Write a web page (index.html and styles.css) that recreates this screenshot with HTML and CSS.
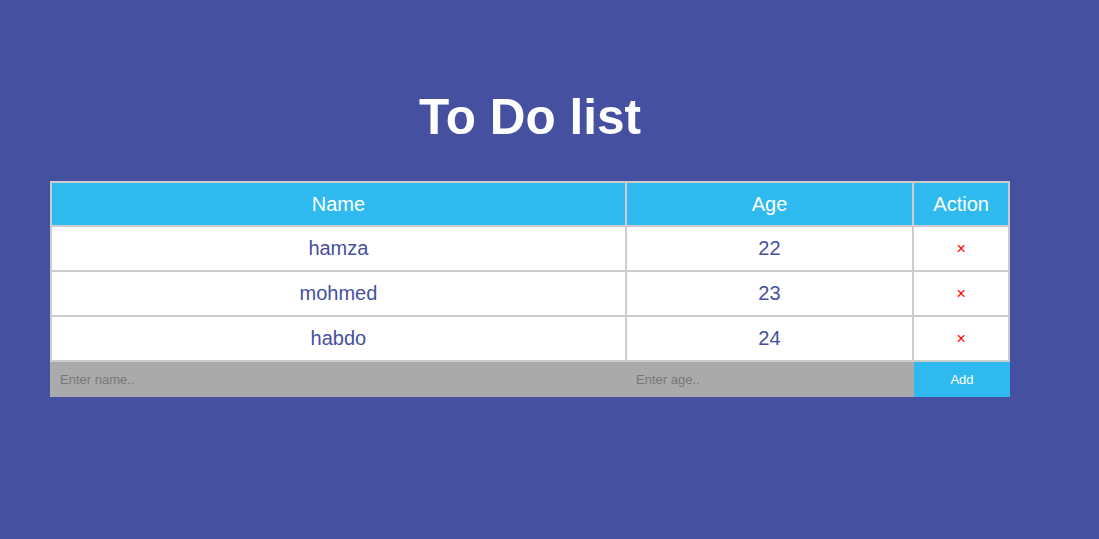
FILE: index.html
```html
<!DOCTYPE html>
<html>
<head>
<meta charset="utf-8">
<link rel="stylesheet" href="styles.css">
</head>
<body>
<div class="app">
  <h1 class="title">To Do list</h1>
  <table class="list">
    <thead>
      <tr><th class="c-name">Name</th><th class="c-age">Age</th><th class="c-act">Action</th></tr>
    </thead>
    <tbody>
      <tr><td>hamza</td><td>22</td><td class="del">×</td></tr>
      <tr><td>mohmed</td><td>23</td><td class="del">×</td></tr>
      <tr><td>habdo</td><td>24</td><td class="del">×</td></tr>
    </tbody>
  </table>
  <form class="add-form">
    <input class="in-name" type="text" placeholder="Enter name..">
    <input class="in-age" type="text" placeholder="Enter age..">
    <button class="add-btn" type="button">Add</button>
  </form>
</div>
</body>
</html>
```

FILE: styles.css
```css
html, body {
  margin: 0;
  padding: 0;
  background: #4650a0;
  font-family: "Liberation Sans", Arial, sans-serif;
}
.app {
  width: 960px;
  margin-left: 50px;
  padding-top: 89px;
}
.title {
  margin: 0 0 36px;
  color: #fff;
  font-size: 49.5px;
  line-height: 56px;
  font-weight: bold;
  text-align: center;
}
.list {
  width: 960px;
  border-collapse: collapse;
  table-layout: fixed;
}
.c-name { width: 60%; }
.c-age { width: 30%; }
.c-act { width: 10%; }
.list th, .list td {
  border: 2px solid #ccc;
  height: 45px;
  padding: 0;
  text-align: center;
  font-size: 20px;
  font-weight: normal;
  box-sizing: border-box;
}
.list th {
  height: 44px;
  background: #2ebaee;
  color: #fff;
}
.list td {
  background: #fff;
  color: #4650a0;
}
.list td.del {
  color: #f00;
  font-size: 16px;
}
.add-form {
  display: flex;
  margin: 0;
  height: 35px;
}
.add-form input, .add-form button {
  border: none;
  outline: none;
  margin: 0;
  height: 35px;
  box-sizing: border-box;
  font-family: "Liberation Sans", Arial, sans-serif;
  font-size: 13px;
}
.add-form input {
  background: #aaa;
  color: #333;
  padding: 0 10px;
}
.add-form input::placeholder {
  color: #777;
}
.in-name { width: 576px; }
.in-age { width: 288px; }
.add-btn {
  width: 96px;
  background: #2ebaee;
  color: #fff;
}
```
